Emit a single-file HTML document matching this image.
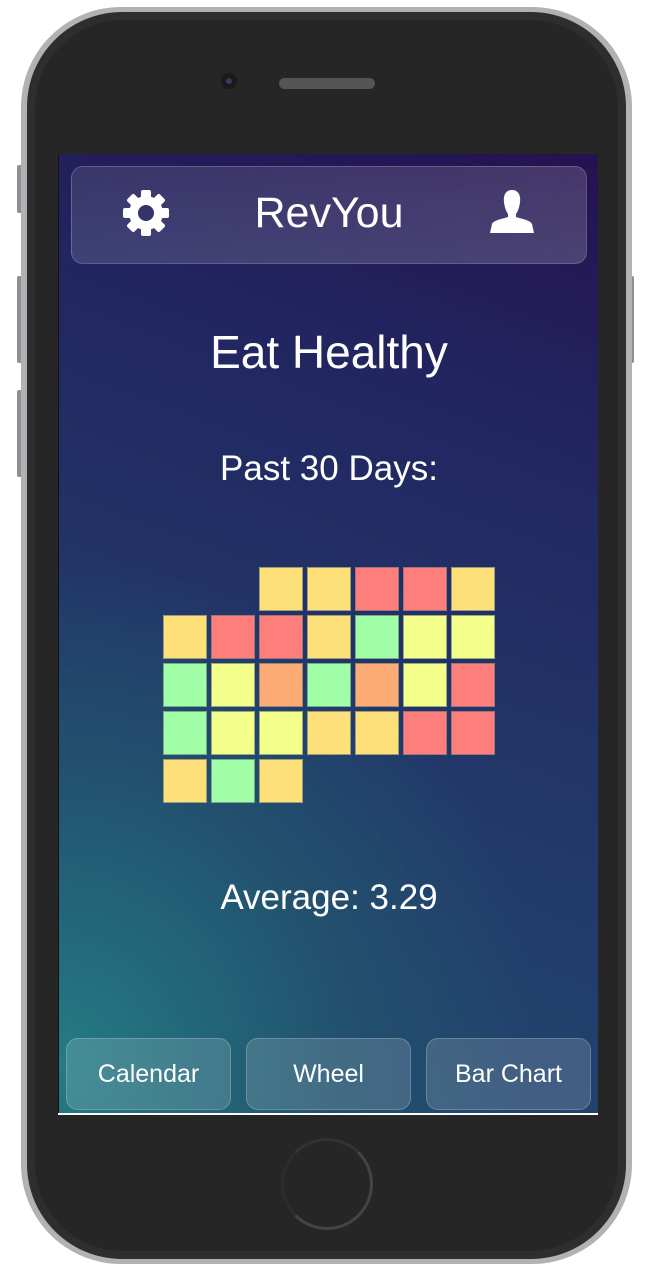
<!DOCTYPE html>
<html><head><meta charset="utf-8"><style>
*{margin:0;padding:0;box-sizing:border-box}
body{width:646px;height:1284px;background:#fff;position:relative;overflow:hidden;font-family:"Liberation Sans",Arial,sans-serif}
.btnside{position:absolute;background:#8f8f93;border-radius:2px;width:5px}
.phone{position:absolute;left:21px;top:7px;width:611px;height:1257px;border-radius:100px;background:#b2b2b4}
.body{position:absolute;left:27px;top:12px;width:599px;height:1247px;border-radius:95px;background:#2e2e2e}
.body2{position:absolute;left:35px;top:20px;width:583px;height:1231px;border-radius:88px;background:#262626}
.screen{position:absolute;left:58px;top:154px;width:540px;height:960px;overflow:hidden;
background:radial-gradient(ellipse 120% 70% at 0% 95%,#247c84 0%,#22506e 45%,rgba(34,60,100,0) 75%),linear-gradient(200deg,#25124f 0%,#222560 25%,#22386a 60%,#224a70 100%);border-left:1px solid #111}
.white{position:absolute;left:58px;top:1113px;width:540px;height:2px;background:#fff}
.hdr{position:absolute;left:12px;top:12px;width:516px;height:98px;border-radius:12px;background:linear-gradient(160deg,rgba(255,255,255,0.10),rgba(255,255,255,0.18));border:1px solid rgba(255,255,255,0.18)}
.t{position:absolute;left:0;width:540px;text-align:center;color:#fff}
.cell{position:absolute;width:44px;height:44px;border:1px solid rgba(90,110,120,0.6)}
.Y{background:#fee07b}.R{background:#fe7e7b}.G{background:#a0fea6}.L{background:#f4fe8b}.O{background:#feac76}
.b{position:absolute;top:884px;width:165px;height:72px;border-radius:12px;background:rgba(255,255,255,0.15);border:1px solid rgba(255,255,255,0.2);color:#fff;font-size:25px;text-align:center;line-height:70px}
</style></head><body>
<div class="btnside" style="left:17px;top:165px;height:48px"></div>
<div class="btnside" style="left:17px;top:276px;height:87px"></div>
<div class="btnside" style="left:17px;top:390px;height:87px"></div>
<div class="btnside" style="left:629px;top:276px;height:87px"></div>
<div class="phone"></div><div class="body"></div><div class="body2"></div>
<div style="position:absolute;left:221px;top:73px;width:16px;height:16px;border-radius:50%;background:#1a1a1a"></div>
<div style="position:absolute;left:226px;top:78px;width:6px;height:6px;border-radius:50%;background:#3d3560"></div>
<div style="position:absolute;left:279px;top:78px;width:96px;height:11px;border-radius:6px;background:#555"></div>
<div style="position:absolute;left:281px;top:1138px;width:92px;height:92px;border-radius:50%;border:3px solid #444;border-top-color:#333;border-left-color:#2c2c2c"></div>
<div class="screen">
 <div class="hdr"></div>
 <svg style="position:absolute;left:63px;top:35px" width="48" height="48" viewBox="-24 -24 48 48">
  <g fill="#fff"><circle r="17"/>
  <g id="tt"><rect x="-5" y="-23" width="10" height="10" rx="2"/></g>
  <use href="#tt" transform="rotate(45)"/><use href="#tt" transform="rotate(90)"/><use href="#tt" transform="rotate(135)"/><use href="#tt" transform="rotate(180)"/><use href="#tt" transform="rotate(225)"/><use href="#tt" transform="rotate(270)"/><use href="#tt" transform="rotate(315)"/></g>
  <circle r="8" fill="#34336a"/></svg>
 <svg style="position:absolute;left:431px;top:36px" width="44" height="43" viewBox="0 0 44 43">
  <path fill="#fff" d="M22 0C16 0 13 5 14 12C14.5 17 16 21 18 24L18 27C12 29 4 30 2 34L0 43L44 43L42 34C40 30 32 29 26 27L26 24C28 21 29.5 17 30 12C31 5 28 0 22 0Z"/></svg>
 <div class="t" style="top:34px;font-size:43px;line-height:50px">RevYou</div>
 <div class="t" style="top:170px;font-size:46px;line-height:56px">Eat Healthy</div>
 <div class="t" style="top:295px;font-size:35px;line-height:40px">Past 30 Days:</div>
 <div class="t" style="top:724px;font-size:35px;line-height:40px">Average: 3.29</div>
 <div class="b" style="left:7px">Calendar</div>
 <div class="b" style="left:187px">Wheel</div>
 <div class="b" style="left:367px">Bar Chart</div>
</div>
<div class="white"></div>
<div style="position:absolute;left:0;top:0">
<div class="cell Y" style="left:259px;top:567px"></div><div class="cell Y" style="left:307px;top:567px"></div><div class="cell R" style="left:355px;top:567px"></div><div class="cell R" style="left:403px;top:567px"></div><div class="cell Y" style="left:451px;top:567px"></div>
<div class="cell Y" style="left:163px;top:615px"></div><div class="cell R" style="left:211px;top:615px"></div><div class="cell R" style="left:259px;top:615px"></div><div class="cell Y" style="left:307px;top:615px"></div><div class="cell G" style="left:355px;top:615px"></div><div class="cell L" style="left:403px;top:615px"></div><div class="cell L" style="left:451px;top:615px"></div>
<div class="cell G" style="left:163px;top:663px"></div><div class="cell L" style="left:211px;top:663px"></div><div class="cell O" style="left:259px;top:663px"></div><div class="cell G" style="left:307px;top:663px"></div><div class="cell O" style="left:355px;top:663px"></div><div class="cell L" style="left:403px;top:663px"></div><div class="cell R" style="left:451px;top:663px"></div>
<div class="cell G" style="left:163px;top:711px"></div><div class="cell L" style="left:211px;top:711px"></div><div class="cell L" style="left:259px;top:711px"></div><div class="cell Y" style="left:307px;top:711px"></div><div class="cell Y" style="left:355px;top:711px"></div><div class="cell R" style="left:403px;top:711px"></div><div class="cell R" style="left:451px;top:711px"></div>
<div class="cell Y" style="left:163px;top:759px"></div><div class="cell G" style="left:211px;top:759px"></div><div class="cell Y" style="left:259px;top:759px"></div>
</div>
</body></html>
